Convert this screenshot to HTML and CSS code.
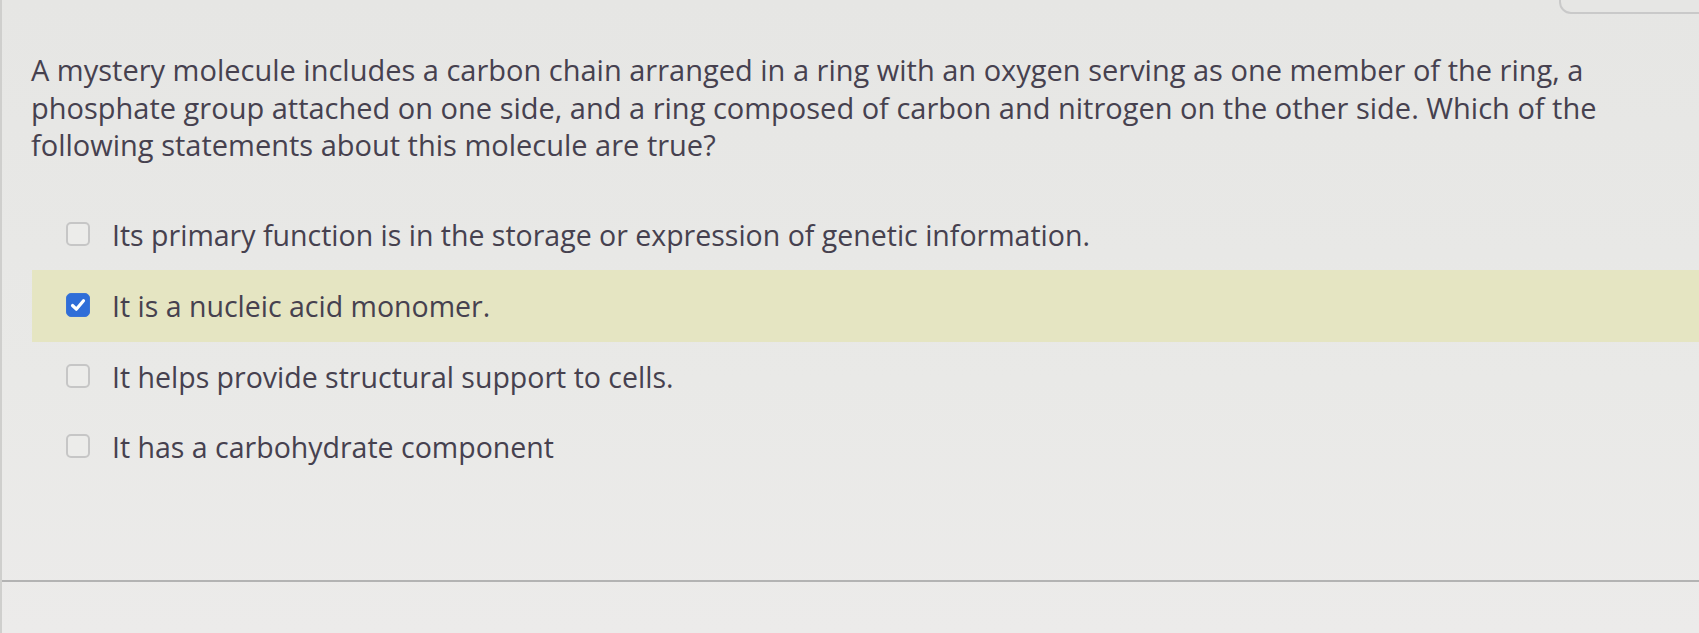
FILE: index.html
```html
<!DOCTYPE html>
<html>
<head>
<meta charset="utf-8">
<link rel="stylesheet" href="styles.css">
</head>
<body>
<div class="page">
  <div class="top-btn"></div>
  <div class="card">
    <p class="question">A mystery molecule includes a carbon chain arranged in a ring with an oxygen serving as one member of the ring, a phosphate group attached on one side, and a ring composed of carbon and nitrogen on the other side. Which of the following statements about this molecule are true?</p>
    <ul class="options">
      <li class="option"><span class="box"></span><span class="label">Its primary function is in the storage or expression of genetic information.</span></li>
      <li class="option selected"><span class="box checked"><svg viewBox="0 0 22 22" width="22" height="22"><path d="M5.5 11.5 L9.3 15.2 L16.5 6.8" fill="none" stroke="#fff" stroke-width="3.2" stroke-linecap="round" stroke-linejoin="round"/></svg></span><span class="label">It is a nucleic acid monomer.</span></li>
      <li class="option"><span class="box"></span><span class="label">It helps provide structural support to cells.</span></li>
      <li class="option"><span class="box"></span><span class="label">It has a carbohydrate component</span></li>
    </ul>
  </div>
  <div class="footer"></div>
</div>
</body>
</html>
```

FILE: styles.css
```css
html, body {
  margin: 0;
  padding: 0;
}
body {
  background: #e8e8e6;
  font-family: "Open Sans", "Noto Sans", sans-serif;
  color: #46414f;
  width: 1699px;
  height: 633px;
  overflow: hidden;
}
.page {
  position: relative;
  height: 633px;
  border-left: 2px solid #cfcfcd;
  box-sizing: border-box;
  background: linear-gradient(180deg, #e6e6e4 0%, #e9e9e7 60%, #ecebea 100%);
}
.top-btn {
  position: absolute;
  right: -12px;
  top: -30px;
  width: 148px;
  height: 40px;
  border: 2px solid #c9c9c9;
  border-radius: 12px;
  background: #e6e6e4;
}
.card {
  height: 582px;
  border-bottom: 2px solid #b3b3b3;
  box-sizing: border-box;
  padding-top: 51px;
}
.question {
  margin: 0;
  padding: 0 60px 0 29px;
  font-size: 29px;
  line-height: 37.5px;
}
.options {
  list-style: none;
  margin: 36px 0 0 30px;
  padding: 0;
}
.option {
  display: flex;
  align-items: center;
  height: 70px;
  padding-left: 34px;
  font-size: 28.5px;
}
.option.selected {
  height: 72px;
  background: #e5e5c2;
}
.box {
  width: 20px;
  height: 20px;
  border: 2px solid #c6c6c6;
  border-radius: 5px;
  background: #ececea;
  flex: none;
  margin-right: 22px;
  margin-top: -2px;
}
.box.checked {
  width: 22px;
  height: 22px;
  border: 1px solid #3a74d6;
  background: #2f6ed8;
  display: flex;
  align-items: center;
  justify-content: center;
}
.label {
  line-height: 36px;
}
.footer {
  height: 50px;
}
```
